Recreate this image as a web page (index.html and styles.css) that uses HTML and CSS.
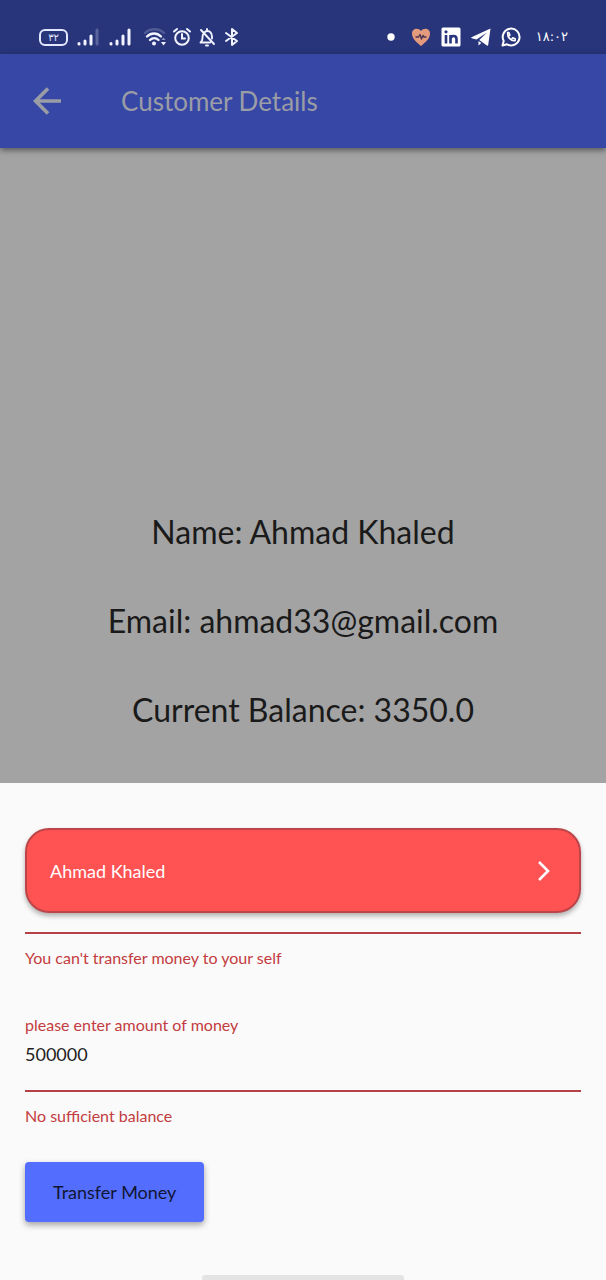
FILE: index.html
```html
<!DOCTYPE html>
<html lang="en">
<head>
<meta charset="utf-8">
<meta name="viewport" content="width=device-width, initial-scale=1">
<title>Customer Details</title>
<link rel="stylesheet" href="styles.css">
</head>
<body>
<div class="screen">
  <div class="status-bar">
    <div class="status-group">
      <span class="battery">٣٢</span>
      <svg class="signal" width="24" height="20" viewBox="0 0 24 20" fill="none" stroke="#f1f3ff" stroke-width="3" stroke-linecap="round"><path d="M3 16.500v.5M9 14v3M15 9v8"/><path d="M21 3v14" opacity=".25"/></svg>
      <svg class="signal" width="24" height="20" viewBox="0 0 24 20" fill="none" stroke="#f1f3ff" stroke-width="3" stroke-linecap="round"><path d="M3 16.500v.5M9 14v3M15 9v8M21 3v14"/></svg>
      <svg class="wifi" width="24" height="20" viewBox="0 0 24 20" fill="none" stroke="#f1f3ff" stroke-width="2.400" stroke-linecap="round"><path d="M2 6C7 1 16 1 21 6" opacity=".2"/><path d="M4 9.500C8 5.500 14 5.500 18 9.500M7 13c2.500-2.400 6-2.400 8.500 0"/><circle cx="11" cy="16.500" r="2" fill="#f1f3ff" stroke="none"/><path d="M18.500 13l2-2.500 2 2.500z" fill="#f1f3ff" stroke="none" opacity=".5"/><path d="M18 15h5l-2.500 3.500z" fill="#f1f3ff" stroke="none"/></svg>
      <svg class="glyph" width="20" height="20" viewBox="0 0 20 20" fill="none" stroke="#f1f3ff" stroke-width="2" stroke-linecap="round"><circle cx="10" cy="11" r="6.800"/><path d="M10 7v4.500h3M2 4.500L5 2M18 4.500L15 2"/></svg>
      <svg class="glyph" width="20" height="20" viewBox="0 0 20 20" fill="none" stroke="#f1f3ff" stroke-width="1.900" stroke-linecap="round" stroke-linejoin="round"><path d="M7.500 5.300C12 2 15 6 15 9.500v2M6 7.500c-.8 2-.3 4.500-1 6L3.500 15.500H13M10 2v1.500M4 3l13 14M9 18.500h2"/></svg>
      <svg class="glyph" width="20" height="20" viewBox="0 0 20 20" fill="none" stroke="#f1f3ff" stroke-width="2" stroke-linecap="round" stroke-linejoin="round"><path d="M4 6l11 8-5 4V2l5 4-11 8"/></svg>
    </div>
    <div class="status-group notices">
      <svg width="8" height="8" viewBox="0 0 8 8"><circle cx="4" cy="4" r="3.700" fill="#fff"/></svg>
      <svg width="20" height="20" viewBox="0 0 20 20" fill="none"><path d="M10 19C6 15.500 1 12 1 6.500 1 1 7.500.5 10 4c2.500-3.500 9-3 9 2.500C19 12 14 15.500 10 19z" fill="#e49a7d"/><path d="M4.500 10h3L9 7.500l1.500 4.500L12 8.500l1 1.500h2.500" stroke="#4a3650" stroke-width="1.400" stroke-linejoin="round"/></svg>
      <svg width="20" height="20" viewBox="0 0 20 20"><rect x=".5" y=".5" width="19" height="19" rx="1.500" fill="#fff"/><g fill="none" stroke="#28357b" stroke-width="2.600"><path d="M5 8v8.500M9.500 8v8.500M9.500 12c0-4 6-4 6 0v4.500"/></g><circle cx="5" cy="4.800" r="1.600" fill="#28357b"/></svg>
      <svg width="20" height="20" viewBox="0 0 20 20" fill="#fff"><path d="M19.500 1.500L.5 10.200c-.5.300-.4.900.2 1l4.800 1.200L16 5.500 8.300 13l7.600 5.600c.6.300 1.200.1 1.300-.6z"/><path d="M7.500 14l2.800 2-2.800 2.500z"/></svg>
      <svg width="20" height="20" viewBox="0 0 20 20" fill="none" stroke="#fff" stroke-width="2" stroke-linecap="round" stroke-linejoin="round"><path d="M1.500 18.500l1.200-4.600a8.400 8.400 0 1 1 3.300 3.400z"/><path d="M6.900 6c-.8 4 3.300 8.200 7 7.600" stroke-width="1.800"/><path d="M6.500 5.500h1.400l1 2.600-1.400 1.200M14.200 13.300v-1.500l-2.700-1-.9 1.500" stroke-width="1.500"/></svg>
      <time class="clock" datetime="18:02"><bdo dir="ltr">١٨:٠٢</bdo></time>
    </div>
  </div>
  <header class="app-bar">
    <button class="back" type="button" aria-label="Back"><svg width="28" height="28" viewBox="0 0 28 28" fill="none" stroke="#9b9da6" stroke-width="3.600"><path d="M28 14H3M15 1.500L2.500 14 15 26.500"/></svg></button>
    <h1 class="title">Customer Details</h1>
  </header>
  <main class="details">
    <p>Name: Ahmad Khaled</p>
    <p>Email: ahmad33@gmail.com</p>
    <p>Current Balance: 3350.0</p>
  </main>
  <form class="sheet">
    <div class="recipient-field">
      <button class="recipient" type="button" aria-describedby="recipient-error">
        <span>Ahmad Khaled</span>
        <svg width="12" height="20" viewBox="0 0 12 20" fill="none" stroke="#fff" stroke-width="2.600"><path d="M1 1l9 9-9 9"/></svg>
      </button>
    </div>
    <p class="error" id="recipient-error">You can't transfer money to your self</p>
    <label class="amount-label" for="amount">please enter amount of money</label>
    <input class="amount" id="amount" type="text" inputmode="numeric" value="500000" aria-describedby="amount-error">
    <p class="error" id="amount-error">No sufficient balance</p>
    <button class="submit" type="button">Transfer Money</button>
    <div class="home-indicator"></div>
  </form>
</div>
</body>
</html>
```
FILE: styles.css
```css
* { box-sizing: border-box; }
body {
  margin: 0;
  background: #fafafa;
  font-family: Lato, "Liberation Sans", sans-serif;
  color: #1a1a1a;
}
p, h1 { margin: 0; font-weight: 400; }
svg { display: block; flex: none; }
button, input { font-family: inherit; border: 0; padding: 0; }
button { cursor: pointer; }
.screen { min-height: 100vh; display: flex; flex-direction: column; }

.status-bar {
  display: flex;
  justify-content: space-between;
  height: 54px;
  padding: 20px 38px 0 39px;
  background: #28357b;
}
.status-group { display: flex; align-items: center; height: 34px; }
.battery {
  width: 29px;
  height: 17px;
  border: 2px solid #e4e8ff;
  border-radius: 6px;
  color: #e4e8ff;
  font: 10px/13px "DejaVu Sans", sans-serif;
  text-align: center;
}
.signal { margin-left: 8px; }
.wifi { margin-left: 11px; }
.glyph { margin-left: 5px; }
.notices { gap: 10px; }
.notices > :first-child { margin-right: 6px; }
.clock {
  margin-left: 5px;
  color: #fff;
  font: 13px/20px "DejaVu Sans", sans-serif;
}

.app-bar {
  position: relative;
  display: flex;
  align-items: center;
  gap: 60px;
  height: 94px;
  padding: 0 33px;
  background: #3747a6;
  box-shadow: 0 2px 6px rgba(0, 0, 0, .5);
}
.back { background: none; }
.title { font-size: 26px; line-height: 40px; color: #9b9da6; }

.details {
  flex: 1;
  display: flex;
  flex-direction: column;
  justify-content: flex-end;
  align-items: center;
  gap: 40px;
  padding: 24px 24px 49px;
  background: #a3a3a3;
  font-size: 32px;
  line-height: 49px;
  text-align: center;
}

.sheet {
  display: flex;
  flex-direction: column;
  padding: 45px 25px 0;
}
.recipient-field { padding-bottom: 19px; border-bottom: 2px solid #b54248; }
.recipient {
  display: flex;
  align-items: center;
  justify-content: space-between;
  width: 100%;
  height: 85px;
  padding: 0 29px 0 23px;
  border: 2px solid #bd4448;
  border-radius: 24px;
  background: #ff5252;
  box-shadow: 0 3px 5px rgba(0, 0, 0, .3);
  color: #fff;
  font-size: 18px;
}
.error, .amount-label { color: #c33c40; font-size: 16px; line-height: 28px; }
.error { padding-top: 10px; }
.amount-label { margin-top: 39px; }
.amount {
  width: 100%;
  height: 53px;
  padding-bottom: 21px;
  border-bottom: 2px solid #b54248;
  border-radius: 0;
  background: none;
  color: #222;
  font-size: 18px;
  outline: none;
}
.submit {
  align-self: flex-start;
  margin-top: 32px;
  padding: 0 28px;
  height: 60px;
  border-radius: 4px;
  background: #536dfe;
  box-shadow: 0 3px 6px rgba(0, 0, 0, .35);
  color: #111633;
  font-size: 18px;
}
.home-indicator {
  align-self: center;
  width: 202px;
  height: 5px;
  margin-top: 53px;
  border-radius: 3px 3px 0 0;
  background: #e4e4e4;
}
```
